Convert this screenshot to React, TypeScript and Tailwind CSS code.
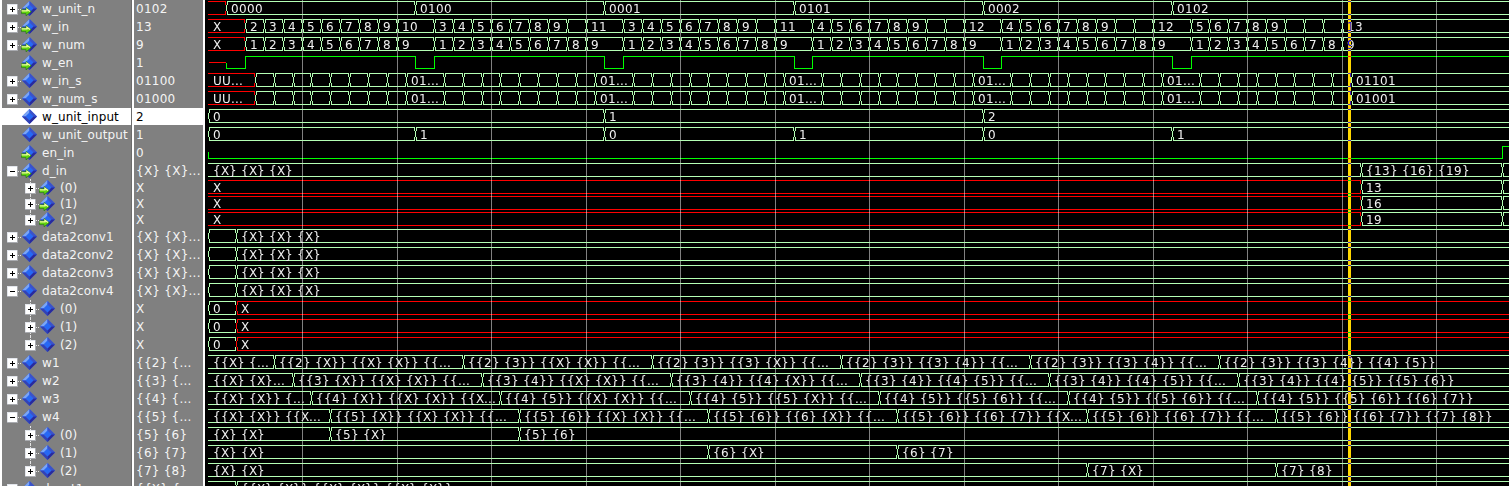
import React from "react";

type Kind = "plus" | "minus" | "none";
type Seg = [number, string, boolean?]; // start (clock index, -1 = left edge), label, unknown
type Row = {
  name: string;
  value: string;
  h: number;
  box: Kind;
  child?: boolean;
  last?: boolean;
  input?: boolean;
  selected?: boolean;
  openEdge?: boolean;
  segs?: Seg[];
  line?: [number, string][]; // x, level
};

const END = 1512;
const at = (k: number) => (k < 0 ? 208 : Math.floor(226.86 + k * 18.905));

const clocked = (offsets: number[][], labels: string[][]): Seg[] =>
  offsets.flatMap((ks, i) => ks.map((k, j) => [k, labels[i][j]] as Seg));

const period = (start: number, count: number) => Array.from({ length: count }, (_, i) => start + i);
const cycles = [0, 10, 20, 30, 40, 50];
const offsets = cycles.map((c) => period(c + 1, 9));

const wIn: Seg[] = [
  [-1, "X", true],
  ...clocked(offsets, [
    ["2", "3", "4", "5", "6", "7", "8", "9", "10"],
    ["3", "4", "5", "6", "7", "8", "9", "", "11"],
    ["3", "4", "5", "6", "7", "8", "9", "", "11"],
    ["4", "5", "6", "7", "8", "9", "", "", "12"],
    ["4", "5", "6", "7", "8", "9", "", "", "12"],
    ["5", "6", "7", "8", "9", "", "", "", "13"],
  ]),
];
const wNum: Seg[] = [
  [-1, "X", true],
  ...clocked(offsets, cycles.map(() => ["1", "2", "3", "4", "5", "6", "7", "8", "9"])),
];
const serial = (final: string): Seg[] => [
  [-1, "UU...", true],
  ...clocked(
    cycles.map((c) => period(c + 1.5, 9)),
    cycles.map((c) => ["", "", "", "", "", "", "", "", c === 50 ? final : "01..."])
  ),
];
const windows = (first: string, start: number, labels: string[]): Seg[] => [
  [-1, first],
  ...labels.map((l, i) => [start + i * 10, l] as Seg),
];

const enable: [number, string][] = [[209, "mid"], [226, "low"], [245, "high"]];
[10, 20, 30, 40, 50].forEach((k) => {
  enable.push([at(k), "low"]);
  enable.push([at(k + 1), "high"]);
});

const unknownBus: Seg[] = [[-1, ""], [0.5, "{X} {X} {X}"]];
const zeroThenX: Seg[] = [[-1, "0"], [0.5, "X", true]];

const rows: Row[] = [
  { name: "w_unit_n", value: "0102", h: 18, box: "plus", input: true, segs: [[-1, "", true], [0, "0000"], [10, "0100"], [20, "0001"], [30, "0101"], [40, "0002"], [50, "0102"]] },
  { name: "w_in", value: "13", h: 18, box: "plus", input: true, segs: wIn },
  { name: "w_num", value: "9", h: 18, box: "plus", input: true, segs: wNum },
  { name: "w_en", value: "1", h: 18, box: "none", input: true, line: enable },
  { name: "w_in_s", value: "01100", h: 18, box: "plus", segs: serial("01101") },
  { name: "w_num_s", value: "01000", h: 18, box: "plus", segs: serial("01001") },
  { name: "w_unit_input", value: "2", h: 18, box: "none", selected: true, openEdge: true, segs: [[-1, "0"], [20, "1"], [40, "2"]] },
  { name: "w_unit_output", value: "1", h: 18, box: "none", openEdge: true, segs: [[-1, "0"], [10, "1"], [20, "0"], [30, "1"], [40, "0"], [50, "1"]] },
  { name: "en_in", value: "0", h: 18, box: "none", input: true, line: [[208, "mid"], [208, "low"], [1502, "high"]] },
  { name: "d_in", value: "{X} {X}...", h: 17, box: "minus", input: true, segs: [[-1, "{X} {X} {X}"], [60, "{13} {16} {19}"], [67.5, ""]] },
  { name: "(0)", value: "X", h: 16, box: "plus", input: true, child: true, segs: [[-1, "X", true], [60, "13"], [67.5, ""]] },
  { name: "(1)", value: "X", h: 16, box: "plus", input: true, child: true, segs: [[-1, "X", true], [60, "16"], [67.5, ""]] },
  { name: "(2)", value: "X", h: 17, box: "plus", input: true, child: true, last: true, segs: [[-1, "X", true], [60, "19"], [67.5, ""]] },
  { name: "data2conv1", value: "{X} {X}...", h: 18, box: "plus", openEdge: true, segs: unknownBus },
  { name: "data2conv2", value: "{X} {X}...", h: 18, box: "plus", openEdge: true, segs: unknownBus },
  { name: "data2conv3", value: "{X} {X}...", h: 18, box: "plus", openEdge: true, segs: unknownBus },
  { name: "data2conv4", value: "{X} {X}...", h: 18, box: "minus", openEdge: true, segs: unknownBus },
  { name: "(0)", value: "X", h: 18, box: "plus", child: true, openEdge: true, segs: zeroThenX },
  { name: "(1)", value: "X", h: 18, box: "plus", child: true, openEdge: true, segs: zeroThenX },
  { name: "(2)", value: "X", h: 18, box: "plus", child: true, last: true, openEdge: true, segs: zeroThenX },
  { name: "w1", value: "{{2} {...", h: 18, box: "plus", segs: windows("{{X} {...", 2.5, ["{{2} {X}} {{X} {X}} {{...", "{{2} {3}} {{X} {X}} {{...", "{{2} {3}} {{3} {X}} {{...", "{{2} {3}} {{3} {4}} {{...", "{{2} {3}} {{3} {4}} {{...", "{{2} {3}} {{3} {4}} {{4} {5}}"]) },
  { name: "w2", value: "{{3} {...", h: 18, box: "plus", segs: windows("{{X} {X}...", 3.5, ["{{3} {X}} {{X} {X}} {{...", "{{3} {4}} {{X} {X}} {{...", "{{3} {4}} {{4} {X}} {{...", "{{3} {4}} {{4} {5}} {{...", "{{3} {4}} {{4} {5}} {{...", "{{3} {4}} {{4} {5}} {{5} {6}}"]) },
  { name: "w3", value: "{{4} {...", h: 18, box: "plus", segs: windows("{{X} {X}} {...", 4.5, ["{{4} {X}} {{X} {X}} {{X...", "{{4} {5}} {{X} {X}} {{...", "{{4} {5}} {{5} {X}} {{...", "{{4} {5}} {{5} {6}} {{...", "{{4} {5}} {{5} {6}} {{...", "{{4} {5}} {{5} {6}} {{6} {7}}"]) },
  { name: "w4", value: "{{5} {...", h: 18, box: "minus", segs: windows("{{X} {X}} {{X...", 5.5, ["{{5} {X}} {{X} {X}} {{...", "{{5} {6}} {{X} {X}} {{...", "{{5} {6}} {{6} {X}} {{...", "{{5} {6}} {{6} {7}} {{X...", "{{5} {6}} {{6} {7}} {{...", "{{5} {6}} {{6} {7}} {{7} {8}}"]) },
  { name: "(0)", value: "{5} {6}", h: 18, box: "plus", child: true, segs: [[-1, "{X} {X}"], [5.5, "{5} {X}"], [15.5, "{5} {6}"]] },
  { name: "(1)", value: "{6} {7}", h: 18, box: "plus", child: true, segs: [[-1, "{X} {X}"], [25.5, "{6} {X}"], [35.5, "{6} {7}"]] },
  { name: "(2)", value: "{7} {8}", h: 18, box: "plus", child: true, last: true, segs: [[-1, "{X} {X}"], [45.5, "{7} {X}"], [55.5, "{7} {8}"]] },
  { name: "d_out1", value: "{{X} {...", h: 18, box: "minus", segs: [[-1, ""], [0.5, "{{X} {X}} {{X} {X}} {{X} {X}}"]] },
];

const GREEN = "#b4ffb4";
const RED = "#ff0000";
const levels: Record<string, number> = { high: 2, mid: 8, low: 14 };

// Whole-pixel advances keep every glyph on the pixel grid.
const advance: Record<string, number> = { " ": 4, ".": 4, U: 9 };
function glyphXs(label: string, x: number) {
  const xs: number[] = [];
  let cur = x;
  for (const ch of label) {
    xs.push(cur);
    cur += advance[ch] ?? 8;
  }
  return xs.join(" ");
}

function busPaths(row: Row, top: number) {
  let green = "";
  let red = "";
  const segs = row.segs ?? [];
  segs.forEach(([k, , bad], i) => {
    const s = at(k);
    const hasNext = i < segs.length - 1;
    const e = hasNext ? at(segs[i + 1][0]) : END;
    const closedLeft = i > 0 || row.openEdge;
    const x0 = closedLeft ? s + 1 : s;
    const w = e - x0;
    let d = `M${x0} ${top}h${w}v1h${-w}zM${x0} ${top + 13}h${w}v1h${-w}z`;
    if (closedLeft) d += `M${s + 1} ${top}h1v4h-1zM${s} ${top + 4}h1v6h-1zM${s + 1} ${top + 10}h1v4h-1z`;
    if (hasNext) d += `M${e - 1} ${top}h1v4h-1zM${e - 1} ${top + 10}h1v4h-1z`;
    if (bad) red += d;
    else green += d;
  });
  return { green, red };
}

function Bus({ row, y }: { row: Row; y: number }) {
  const { green, red } = busPaths(row, y + 1);
  return (
    <g>
      <path d={green} fill={GREEN} />
      <path d={red} fill={RED} />
      {(row.segs ?? []).map(([k, label], i) =>
        label ? (
          <text key={i} x={glyphXs(label, at(k) + 5)} y={y + 13} fill="#f0f0f0" className="whitespace-pre">
            {label}
          </text>
        ) : null
      )}
    </g>
  );
}

function Scalar({ row, y }: { row: Row; y: number }) {
  const pts = row.line ?? [];
  let d = "";
  pts.forEach(([x, lv], i) => {
    if (lv === "mid") return;
    const ly = y + levels[lv] + 0.5;
    if (d === "") d = `M${x + 0.5} ${y + levels.mid + (row.name === "en_in" ? 0 : 0.5)}V${ly}`;
    else d += `H${x + 0.5}V${ly}`;
    if (i === pts.length - 1) d += `H${END}`;
  });
  return (
    <g fill="none">
      {pts[1][0] > pts[0][0] && <path d={`M${pts[0][0]} ${y + 8.5}H${pts[1][0]}`} stroke={RED} />}
      <path d={d} stroke="#00ff00" />
    </g>
  );
}

function Diamond() {
  return (
    <g>
      <path d="M7.5 0L15 7.5L7.5 15L0 7.5Z" fill="#2a5bea" />
      <path d="M7.5 0L0 7.5H4L7.5 4Z" fill="#7ba6f6" />
      <path d="M7.5 0L15 7.5H11L7.5 4Z" fill="#3c52c8" />
      <path d="M0 7.5L7.5 15V11L4 7.5Z" fill="#3442b4" />
      <path d="M15 7.5L7.5 15V11L11 7.5Z" fill="#2a2a9c" />
      <path d="M7.5 3.5L11.5 7.5L7.5 11.5L3.5 7.5Z" fill="#2768f4" />
    </g>
  );
}

function SignalIcon({ input }: { input?: boolean }) {
  return (
    <svg width="17" height="18" viewBox="-1 0 17 18" className="shrink-0">
      <g transform="translate(0 1)">
        <Diamond />
      </g>
      {input && (
        <path d="M-0.5 9.8H4V7.5L9.3 11.7L4 15.8V13.6H-0.5Z" fill="#5fd40c" stroke="#1d6b10" strokeWidth="0.6" />
      )}
      {input && <path d="M-0.5 10.8H5V9.2L8 11.5" fill="none" stroke="#f0fba0" strokeWidth="1.3" />}
    </svg>
  );
}

function Toggle({ kind }: { kind: Kind }) {
  return (
    <svg width="14" height="18" viewBox="0 0 14 18" className="shrink-0" shapeRendering="crispEdges">
      {kind !== "none" && (
        <g>
          <rect x="0" y="4" width="11" height="11" fill="#a9abb0" />
          <rect x="0" y="4" width="10" height="10" fill="#e3e6ec" />
          <rect x="1" y="5" width="9" height="9" fill="#ffffff" />
          <rect x="3" y="9" width="5" height="1" fill="#000" />
          {kind === "plus" && <rect x="5" y="7" width="1" height="5" fill="#000" />}
          <path d="M11 9h1v1h-1zM13 9h1v1h-1z" fill="#e4e4e4" />
        </g>
      )}
    </svg>
  );
}

function NameCell({ row }: { row: Row }) {
  return (
    <div className={`relative flex w-[129px] shrink-0 items-start whitespace-pre ${row.child ? "pl-[23px]" : "pl-[5px]"}`} style={{ height: row.h }}>
      {row.selected && <div className="absolute inset-x-0 top-0 h-[17px] bg-white" />}
      {row.child && (
        <div className={`absolute left-[28px] top-0 w-px border-l border-dotted border-[#e4e4e4] ${row.last ? "h-[4px]" : "h-full"}`} />
      )}
      <div className="relative flex">
        <Toggle kind={row.box} />
        <SignalIcon input={row.input} />
        <span className={`pl-[4px] leading-[18px] tracking-[0.08px] ${row.selected ? "text-black" : "text-[#f4f4f4]"}`}>{row.name}</span>
      </div>
    </div>
  );
}

function ValueCell({ row }: { row: Row }) {
  return (
    <div className="flex w-[69px] shrink-0 flex-col whitespace-pre" style={{ height: row.h }}>
      <div className={`h-[17px] w-[69px] shrink-0 pl-[2px] leading-[18px] tracking-[0.25px] ${row.selected ? "bg-white text-black" : "text-[#f4f4f4]"}`}>{row.value}</div>
    </div>
  );
}

export default function App() {
  let y = 0;
  const placed = rows.map((row) => {
    const top = y;
    y += row.h;
    return { row, top };
  });
  const grid = Array.from({ length: 13 }, (_, i) => at(4 + i * 5));
  return (
    <div className="flex h-[486px] w-[1509px] overflow-hidden bg-[#808080] font-['DejaVu_Sans',sans-serif] text-[12px]">
      <div className="w-[2px] shrink-0 bg-white" />
      <div className="flex w-[129px] shrink-0 flex-col">
        {rows.map((row, i) => (
          <NameCell key={i} row={row} />
        ))}
      </div>
      <div className="w-[3px] shrink-0 border-l border-[#6c6c6c] bg-white" />
      <div className="flex w-[69px] shrink-0 flex-col">
        {rows.map((row, i) => (
          <ValueCell key={i} row={row} />
        ))}
      </div>
      <div className="w-[2px] shrink-0 bg-white" />
      <div className="w-[1304px] shrink-0 overflow-hidden bg-black">
        <svg width="1304" height="486" viewBox="205 0 1304 486" shapeRendering="crispEdges" className="isolate block">
          <rect x="205" y="0" width="1304" height="486" fill="#000" />
          {placed.map(({ row, top }, i) =>
            row.line ? <Scalar key={i} row={row} y={top} /> : <Bus key={i} row={row} y={top} />
          )}
          {grid.map((x) => (
            <rect key={x} x={x} y="0" width="1" height="486" fill="#808080" className="mix-blend-lighten" />
          ))}
          <rect x="1348" y="0" width="3" height="486" fill="#ffd700" className="mix-blend-difference" />
        </svg>
      </div>
    </div>
  );
}
